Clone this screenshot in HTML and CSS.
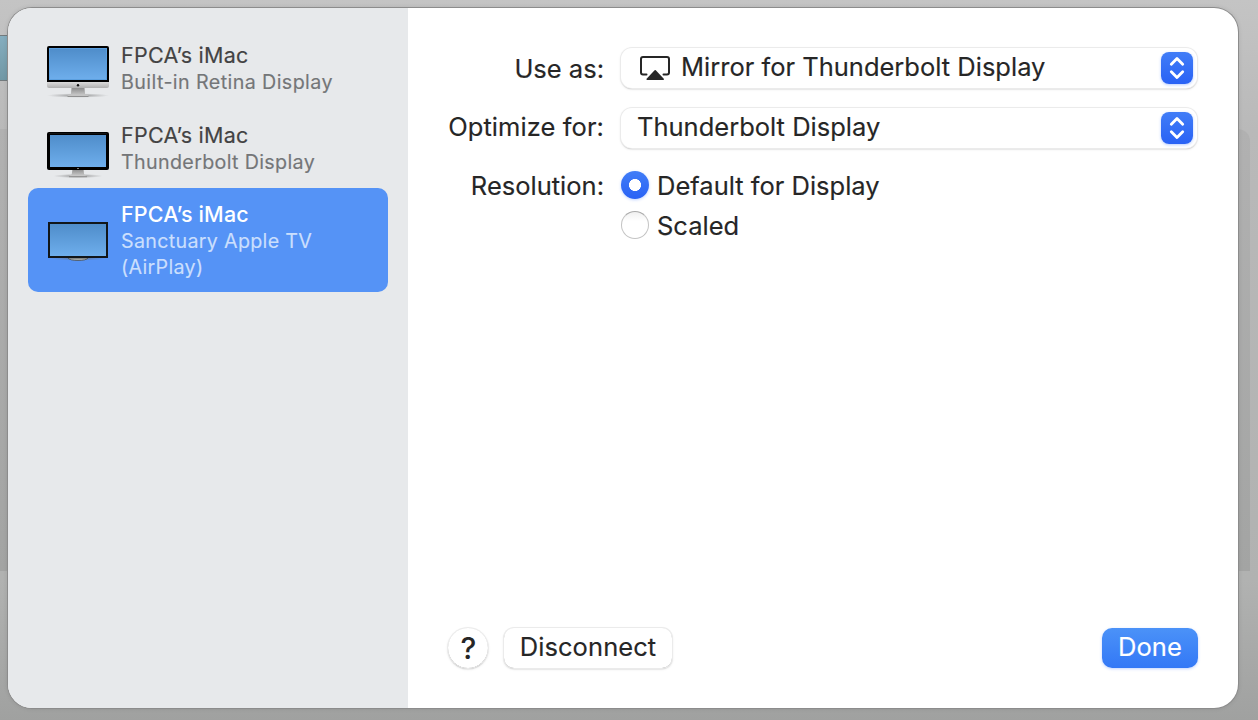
FILE: index.html
```html
<!DOCTYPE html>
<html lang="en">
<head>
<meta charset="utf-8">
<title>Display Settings</title>
<link rel="stylesheet" href="styles.css">
</head>
<body>
<div class="backdrop-row"></div>
<div class="backdrop-panel"></div>
<main class="dialog">
  <aside class="sidebar">
    <div class="device">
      <svg class="device-icon" width="66" height="56" viewBox="0 0 66 56">
        <defs>
          <linearGradient id="screen" x2="0" y2="1"><stop stop-color="#4f8dca"/><stop offset="1" stop-color="#6eaeec"/></linearGradient>
          <linearGradient id="metal" x2="0" y2="1"><stop stop-color="#e2e2e2"/><stop offset="1" stop-color="#b0b0b0"/></linearGradient>
          <linearGradient id="stand" x2="0" y2="1"><stop stop-color="#8c8c8c"/><stop offset="1" stop-color="#d2d2d2"/></linearGradient>
          <radialGradient id="shade"><stop stop-color="#555" stop-opacity=".65"/><stop offset="1" stop-color="#777" stop-opacity="0"/></radialGradient>
        </defs>
        <ellipse cx="33" cy="49.5" rx="31" ry="2.3" fill="url(#shade)"/>
        <path d="M2 35h62v5q0 2-2 2H4q-2 0-2-2z" fill="url(#metal)"/>
        <path d="M26.5 42h13l.6 6 3.4 1.500v.8h-21v-.8l3.400-1.500z" fill="url(#stand)"/>
        <path d="M22.500 50.400h21" stroke="#858585" stroke-width=".9"/>
        <path d="M2 36V2q0-2 2-2h58q2 0 2 2v34z" fill="#000"/>
        <rect x="4.500" y="2.500" width="57" height="31" fill="url(#screen)" stroke="#5b9fdf" stroke-width="1"/>
        <circle cx="33" cy="39.200" r="1.200" fill="#111"/>
      </svg>
      <div class="device-text"><div class="device-name">FPCA’s iMac</div><div class="device-detail retina">Built-in Retina Display</div></div>
    </div>
    <div class="device">
      <svg class="device-icon" width="66" height="56" viewBox="0 0 66 56">
        <ellipse cx="33" cy="50" rx="25" ry="2.200" fill="url(#shade)"/>
        <path d="M27.500 43h11l.6 5.500 2.800 1.500v.8h-18V50l2.800-1.500z" fill="url(#stand)"/>
        <path d="M24 50.700h18" stroke="#858585" stroke-width=".9"/>
        <rect x="2" y="6" width="62" height="38" rx="2" fill="#000"/>
        <path d="M4 7.500h58" stroke="#202020" stroke-width=".6"/>
        <rect x="5" y="9" width="56" height="32" fill="url(#screen)"/>
        <rect x="32" y="42.200" width="2" height=".8" fill="#999"/>
      </svg>
      <div class="device-text"><div class="device-name">FPCA’s iMac</div><div class="device-detail">Thunderbolt Display</div></div>
    </div>
    <div class="device selected">
      <svg class="device-icon" width="66" height="56" viewBox="0 0 66 56">
        <ellipse cx="33" cy="42.500" rx="28" ry="2.200" fill="url(#shade)"/>
        <path d="M23 42h20q-2 2.500-10 2.500T23 42z" fill="#a5aaa8" stroke="#44494b" stroke-width=".7"/>
        <rect x="3" y="6" width="60" height="36" fill="#111619"/>
        <rect x="5" y="8" width="56" height="32" fill="url(#screen)"/>
      </svg>
      <div class="device-text"><div class="device-name">FPCA’s iMac</div><div class="device-detail">Sanctuary Apple TV</div><div class="device-detail">(AirPlay)</div></div>
    </div>
  </aside>
  <section class="content">
    <div class="form">
      <div class="row row-use">
        <div class="label">Use as:</div>
        <div class="popup">
          <svg class="airplay" width="32" height="27" viewBox="0 0 32 27" fill="none">
            <path d="M7.500 19.600H4q-2 0-2-2V4q0-2 2-2h24q2 0 2 2v13.600q0 2-2 2h-3.500" stroke="#262626" stroke-width="2" stroke-linecap="round"/>
            <path d="M15.600 15.300q.6-.6 1.200 0l8 8.500q.6 1.200-.6 1.200H8.200q-1.200 0-.6-1.200z" fill="#262626"/>
          </svg>
          <span class="value">Mirror for Thunderbolt Display</span>
          <span class="stepper"><svg width="32" height="32" viewBox="0 0 32 32"><path d="M10.300 12.300 16 6.500l5.700 5.800M10.300 19.700l5.700 5.800 5.700-5.800" fill="none" stroke="#fff" stroke-width="2.800" stroke-linecap="round" stroke-linejoin="round"/></svg></span>
        </div>
      </div>
      <div class="row">
        <div class="label optimize">Optimize for:</div>
        <div class="popup">
          <span class="value">Thunderbolt Display</span>
          <span class="stepper"><svg width="32" height="32" viewBox="0 0 32 32"><path d="M10.300 12.300 16 6.500l5.700 5.800M10.300 19.700l5.700 5.800 5.700-5.800" fill="none" stroke="#fff" stroke-width="2.800" stroke-linecap="round" stroke-linejoin="round"/></svg></span>
        </div>
      </div>
      <div class="row row-resolution">
        <div class="label">Resolution:</div>
        <div class="radios">
          <div class="radio-row"><span class="radio on"></span><span class="choice">Default for Display</span></div>
          <div class="radio-row"><span class="radio"></span><span class="choice">Scaled</span></div>
        </div>
      </div>
    </div>
    <footer class="footer">
      <div class="help">?</div>
      <div class="button">Disconnect</div>
      <div class="button primary">Done</div>
    </footer>
  </section>
</main>
</body>
</html>
```
FILE: styles.css
```css
* { box-sizing: border-box; }
body {
  margin: 0; width: 1258px; height: 720px; padding: 8px 20px 12px 8px; position: relative; overflow: hidden;
  background: linear-gradient(#c4c4c4 0, #b9b9b9 130px, #b1b2b1 580px, #a0a1a0 720px);
  font-family: Inter, "Liberation Sans", sans-serif; color: #262626; white-space: nowrap;
}
.backdrop-row { position: absolute; left: 0; top: 35px; width: 30px; height: 46px; background: linear-gradient(#85aebf, #7198a5); border: solid #737b7e; border-width: 1px 0; }
.backdrop-panel { position: absolute; left: 0; top: 129px; width: 1250px; height: 442px; border-radius: 0 12px 0 0; background: linear-gradient(#b1b1b1, #a3a4a3); }
.dialog { position: relative; display: flex; height: 700px; border-radius: 24px; overflow: hidden; background: #fff; box-shadow: 0 0 0 1px #8c8c8c, 0 0 5px rgba(0,0,0,.15); }
.sidebar { width: 400px; padding: 20px; background: #e7e9eb; }
.device { display: flex; height: 80px; padding: 14px 17px 0 17px; gap: 10px; border-radius: 10px; }
.device-icon { flex: none; margin-top: 4px; }
.device-name { height: 27px; line-height: 27px; font-size: 21.5px; color: #434343; letter-spacing: .27px; -webkit-text-stroke: .15px; }
.device-detail { height: 26px; line-height: 26px; font-size: 19.7px; color: #747678; letter-spacing: .33px; -webkit-text-stroke: .15px; }
.device-detail.retina { letter-spacing: .4px; }
.selected { height: 104px; padding-top: 13px; background: #5593f6; }
.selected .device-icon { margin-top: 15px; }
.selected .device-name { color: #fff; font-weight: 500; letter-spacing: .15px; -webkit-text-stroke: 0; }
.selected .device-detail { color: #cbdffd; letter-spacing: .3px; }
.content { flex: 1; padding: 40px; display: flex; flex-direction: column; justify-content: space-between; }
.form { display: flex; flex-direction: column; gap: 20px; }
.row { display: flex; height: 40px; gap: 17px; }
.label { width: 156px; text-align: right; font-size: 25.5px; line-height: 37px; -webkit-text-stroke: .15px; }
.optimize { letter-spacing: .08px; }
.row-use .label { line-height: 41px; }
.popup { flex: none; width: 576px; height: 40px; padding: 4px 4px 4px 16px; display: flex; align-items: center; border-radius: 11px; background: #fff; box-shadow: 0 0 0 1px #ebebeb, 0 1px 1px rgba(0,0,0,.32), 0 1px 3px rgba(0,0,0,.15); }
.airplay { margin: 0 10px 0 2px; }
.value { font-size: 25.5px; line-height: 32px; padding-bottom: 2px; -webkit-text-stroke: .15px; }
.stepper { display: flex; margin-left: auto; width: 32px; height: 32px; border-radius: 8px; background: linear-gradient(#417df7, #2962f5); box-shadow: 0 1px 3px rgba(50,110,255,.35); }
.row-resolution { height: 80px; }
.row-resolution .label { line-height: 35px; }
.radios { margin-top: -3px; }
.radio-row { display: flex; align-items: center; height: 40px; gap: 8px; }
.radio { width: 28px; height: 28px; border-radius: 50%; border: 1px solid #c4c4c4; border-top-color: #aaa; background: linear-gradient(#f0f0f0, #fff 35%); }
.radio.on { border: 0; background: radial-gradient(circle, #fff 5.7px, transparent 6.3px), linear-gradient(#417df7, #2962f5); box-shadow: 0 1px 3px rgba(50,110,255,.3); }
.choice { font-size: 25.5px; line-height: 40px; padding-top: 2px; -webkit-text-stroke: .15px; }
.footer { display: flex; height: 40px; }
.help { width: 40px; height: 40px; padding-left: 1px; border-radius: 50%; text-align: center; font-size: 30px; font-weight: 500; line-height: 41px; box-shadow: 0 0 0 1px #ebebeb, 0 1px 1px rgba(0,0,0,.32), 0 1px 3px rgba(0,0,0,.15); }
.button { width: 168px; height: 40px; margin-left: 16px; border-radius: 10px; text-align: center; font-size: 25.5px; letter-spacing: .08px; line-height: 38px; -webkit-text-stroke: .15px; box-shadow: 0 0 0 1px #ebebeb, 0 1px 1px rgba(0,0,0,.32), 0 1px 3px rgba(0,0,0,.15); }
.primary { width: 96px; margin-left: auto; color: #fff; background: linear-gradient(#4b92f8, #3378f6); box-shadow: 0 1px 3px rgba(50,110,255,.3); }
```
